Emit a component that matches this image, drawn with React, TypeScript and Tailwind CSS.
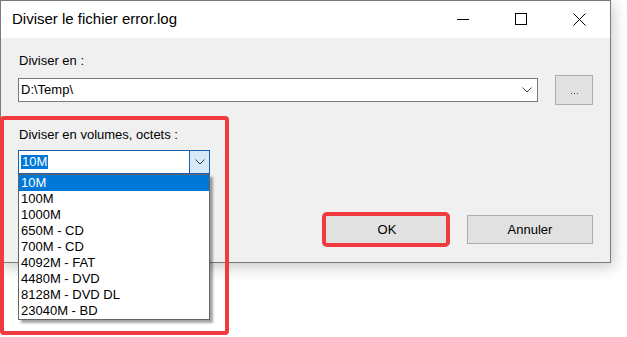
import React from 'react';

const sizes = [
  '10M',
  '100M',
  '1000M',
  '650M - CD',
  '700M - CD',
  '4092M - FAT',
  '4480M - DVD',
  '8128M - DVD DL',
  '23040M - BD',
];

function Chevron({ className }: { className?: string }) {
  return (
    <svg className={className} width="10" height="6" viewBox="0 0 10 6" fill="none">
      <path d="M0.5 0.5L5 5L9.5 0.5" stroke="currentColor" strokeWidth="1" />
    </svg>
  );
}

export default function App() {
  return (
    <div
      className="relative w-[627px] h-[337px] overflow-hidden bg-white text-black"
      style={{ fontFamily: '"Liberation Sans", Arial, sans-serif' }}
    >
      {/* Dialog window */}
      <div className="w-[611px] h-[263px] border border-[#7a7a7a] bg-[#f0f0f0] flex flex-col shadow-[2px_4px_14px_rgba(0,0,0,0.22)]">
        {/* Title bar */}
        <div className="h-[37px] bg-white flex items-center shrink-0">
          <span className="pl-[11px] text-[15px] flex-1">Diviser le fichier error.log</span>
          <div className="flex h-full">
            <div className="w-[58px] flex items-center justify-center">
              <div className="w-[12px] h-px bg-black -ml-[4px]" />
            </div>
            <div className="w-[58px] flex items-center justify-center">
              <div className="w-[12px] h-[12px] border border-black -ml-[4px] -mt-[1px]" />
            </div>
            <div className="w-[58px] flex items-center justify-center">
              <svg className="-ml-[4px] -mt-[1px]" width="13" height="13" viewBox="0 0 13 13">
                <path d="M0.5 0.5L12.5 12.5M12.5 0.5L0.5 12.5" stroke="black" strokeWidth="1" />
              </svg>
            </div>
          </div>
        </div>

        {/* Body */}
        <div className="flex-1 pl-[17px] pr-[17px] pt-[15px] text-[13px]">
          <div className="leading-[16px] pl-px">Diviser en :</div>

          <div className="mt-[6px] flex items-center h-[30px] gap-[17px]">
            <div className="w-[520px] h-[24px] bg-white border border-[#7a7a7a] flex items-center pl-[2px] pr-[5px]">
              <span className="flex-1 leading-[16px]">D:\Temp\</span>
              <Chevron className="text-[#444]" />
            </div>
            <div className="w-[38px] h-[30px] bg-[#e1e1e1] border border-[#adadad] flex items-center justify-center gap-[2px] pt-[6px]">
              <span className="w-px h-px bg-[#5a2a8a]" />
              <span className="w-px h-px bg-[#2a2a9a]" />
              <span className="w-px h-px bg-[#8a3a2a]" />
            </div>
          </div>

          <div className="mt-[22px] leading-[16px] pl-px">Diviser en volumes, octets :</div>

          <div className="mt-[7px] w-[192px] h-[24px] bg-white border border-[#1a5fa8] flex">
            <div className="flex-1 flex items-center pl-[2px]">
              <span className="bg-[#0078d7] text-white leading-[14px] px-px">10M</span>
            </div>
            <div className="w-[20px] h-full bg-[#d6e9f9] border-l border-[#1a5fa8] flex items-center justify-center bg-[radial-gradient(#b8cde4_0.6px,transparent_0.7px)] bg-[length:4px_4px]">
              <Chevron className="text-[#333]" />
            </div>
          </div>

          <div className="mt-[41px] flex justify-end gap-[17px]">
            <div className="w-[126px] h-[29px] bg-[#e1e1e1] border border-[#adadad] flex items-center justify-center">
              OK
            </div>
            <div className="w-[126px] h-[29px] bg-[#e1e1e1] border border-[#adadad] flex items-center justify-center">
              Annuler
            </div>
          </div>
        </div>
      </div>

      {/* Open dropdown list */}
      <div className="absolute left-[18px] top-[174px] w-[192px] h-[146px] bg-white border border-[#646464] shadow-[3px_3px_2px_rgba(0,0,0,0.35)] text-[13px]">
        {sizes.map((s, i) => (
          <div
            key={s}
            className={
              i === 0
                ? 'h-[16px] leading-[16px] pl-[2px] bg-[#0078d7] text-white'
                : 'h-[16px] leading-[16px] pl-[2px]'
            }
          >
            {s}
          </div>
        ))}
      </div>

      {/* Red annotation frames */}
      <div className="absolute left-0 top-[116px] w-[229px] h-[219px] border-4 border-[#f03a3e] rounded-[4px]" />
      <div className="absolute left-[322px] top-[212px] w-[128px] h-[35px] border-4 border-[#f03a3e] rounded-[5px]" />
    </div>
  );
}
